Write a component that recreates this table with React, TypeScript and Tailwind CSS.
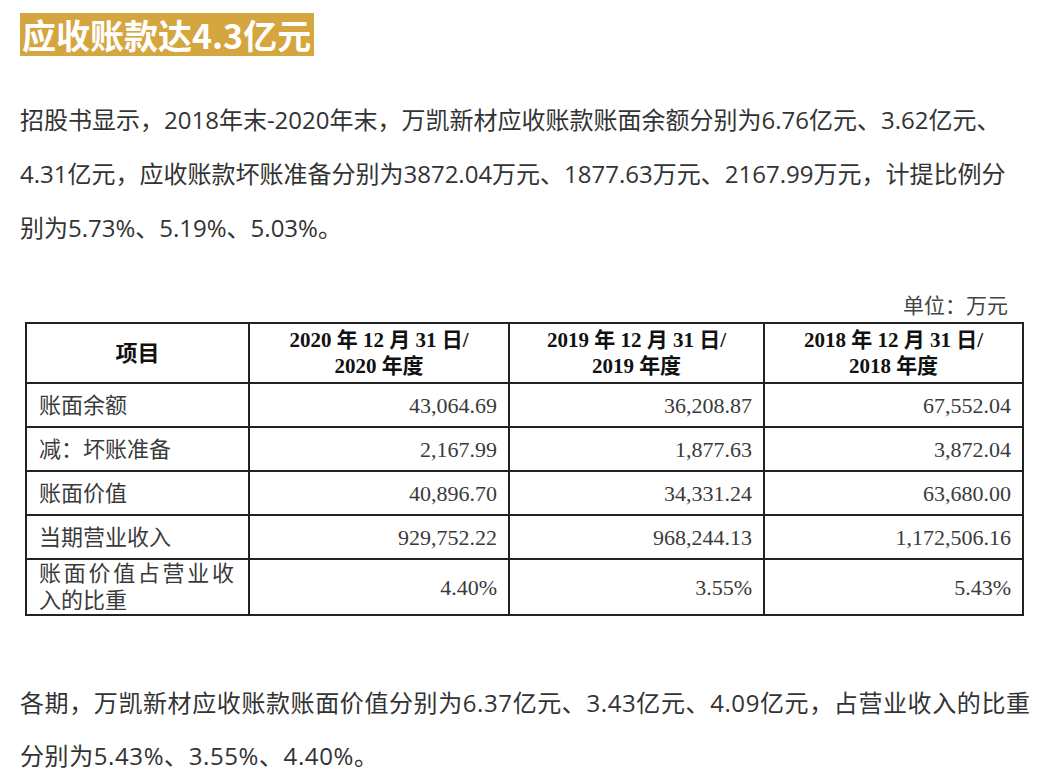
import React from 'react';

const ROWS = [
    { label: '账面余额', values: ['43,064.69', '36,208.87', '67,552.04'] },
    { label: '减：坏账准备', values: ['2,167.99', '1,877.63', '3,872.04'] },
    { label: '账面价值', values: ['40,896.70', '34,331.24', '63,680.00'] },
    { label: '当期营业收入', values: ['929,752.22', '968,244.13', '1,172,506.16'] },
];

const YEARS = ['2020', '2019', '2018'];

const bodyFont = "font-['Open_Sans','Noto_Sans_CJK_SC',sans-serif]";
const tableFont = "font-['Liberation_Serif','Noto_Sans_CJK_SC',serif]";

export default function App() {
    return (
        <div className="w-[1056px] min-h-[770px] bg-white px-[20px] pt-[13px] text-[#333]">
            {/* Title */}
            <h2 className="inline-block bg-[#d5a63f] pl-[2px] pr-[3px] text-[34px] leading-[43px] font-bold text-white font-['Noto_Sans_CJK_SC',sans-serif]">
                应收账款达4.3亿元
            </h2>

            <p className={`mt-[37px] whitespace-nowrap text-[24px] leading-[54px] ${bodyFont}`}>
                招股书显示，2018年末-2020年末，万凯新材应收账款账面余额分别为6.76亿元、3.62亿元、<br />
                4.31亿元，应收账款坏账准备分别为3872.04万元、1877.63万元、2167.99万元，计提比例分<br />
                别为5.73%、5.19%、5.03%。
            </p>

            {/* Table */}
            <div className={`ml-[5px] mt-[39px] w-[997px] ${tableFont}`}>
                <div className="pr-[14px] text-right text-[21px] leading-[24px] text-[#444]">单位：万元</div>
                <table className="mt-[4px] w-full table-fixed border-collapse border-2 border-[#222]">
                    <colgroup>
                        <col className="w-[223px]" />
                        <col className="w-[260px]" />
                        <col className="w-[255px]" />
                        <col className="w-[259px]" />
                    </colgroup>
                    <thead>
                        <tr className="h-[60px]">
                            <th className="border-2 border-[#222] text-[22px] font-bold text-[#111]">项目</th>
                            {YEARS.map(y => (
                                <th key={y} className="border-2 border-[#222] text-[21px] leading-[26px] font-bold text-[#111]">
                                    {y} 年 12 月 31 日/<br />{y} 年度
                                </th>
                            ))}
                        </tr>
                    </thead>
                    <tbody className="text-[22px] text-[#3a3a3a]">
                        {ROWS.map(row => (
                            <tr key={row.label} className="h-[44px]">
                                <td className="border-2 border-[#222] pl-[12px]">{row.label}</td>
                                {row.values.map((v, i) => (
                                    <td key={i} className="border-2 border-[#222] pr-[11px] text-right">{v}</td>
                                ))}
                            </tr>
                        ))}
                        <tr className="h-[56px]">
                            <td className="border-2 border-[#222] pl-[12px] pr-[14px] text-justify leading-[27px]">
                                账面价值占营业收入的比重
                            </td>
                            {['4.40%', '3.55%', '5.43%'].map(v => (
                                <td key={v} className="border-2 border-[#222] pr-[11px] text-right">{v}</td>
                            ))}
                        </tr>
                    </tbody>
                </table>
            </div>

            <p className={`mt-[60px] whitespace-nowrap text-[24px] leading-[53px] tracking-[0.6px] ${bodyFont}`}>
                各期，万凯新材应收账款账面价值分别为6.37亿元、3.43亿元、4.09亿元，占营业收入的比重<br />
                分别为5.43%、3.55%、4.40%。
            </p>
        </div>
    );
}
